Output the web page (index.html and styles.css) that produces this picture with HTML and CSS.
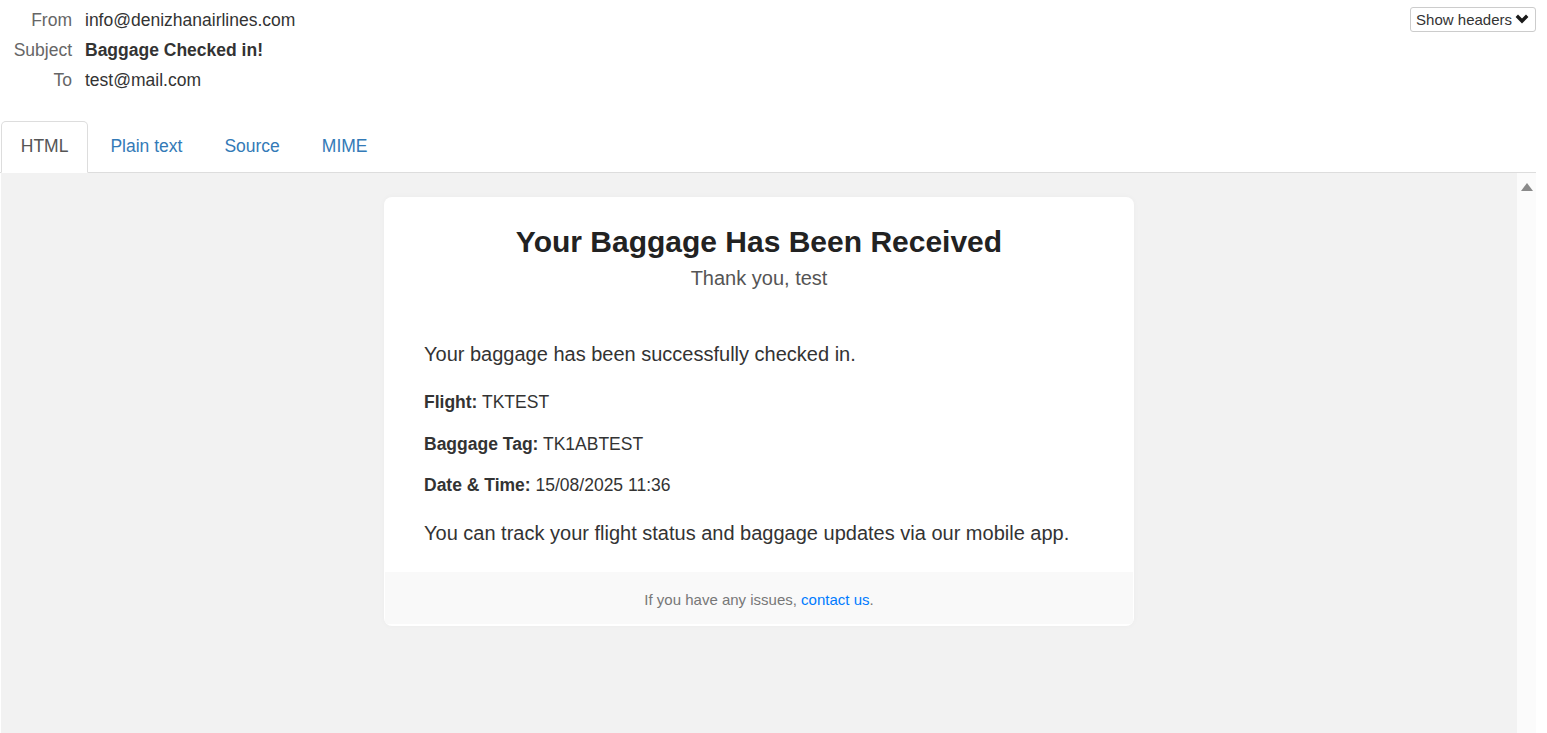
FILE: index.html
```html
<!DOCTYPE html>
<html>
<head>
<meta charset="utf-8">
<link rel="stylesheet" href="styles.css">
</head>
<body>
<div class="page">
  <div class="headers">
    <div class="fields">
      <div class="row"><span class="label">From</span><span class="value">info@denizhanairlines.com</span></div>
      <div class="row"><span class="label">Subject</span><span class="value strong">Baggage Checked in!</span></div>
      <div class="row"><span class="label">To</span><span class="value">test@mail.com</span></div>
    </div>
    <button class="show-btn">Show headers <svg class="chev" width="14" height="10" viewBox="0 0 14 10"><polyline points="1.8,1.8 7,7 12.2,1.8" fill="none" stroke="#1a1a1a" stroke-width="3.4"/></svg></button>
  </div>

  <ul class="tabs">
    <li class="tab active">HTML</li>
    <li class="tab">Plain text</li>
    <li class="tab">Source</li>
    <li class="tab">MIME</li>
  </ul>

  <div class="frame">
    <div class="frame-content">
      <div class="card">
        <div class="card-head">
          <h1 class="title">Your Baggage Has Been Received</h1>
          <p class="subtitle">Thank you, test</p>
        </div>
        <div class="card-body">
          <p class="lead">Your baggage has been successfully checked in.</p>
          <p class="info"><b>Flight:</b> TKTEST</p>
          <p class="info"><b>Baggage Tag:</b> TK1ABTEST</p>
          <p class="info"><b>Date &amp; Time:</b> 15/08/2025 11:36</p>
          <p class="lead last">You can track your flight status and baggage updates via our mobile app.</p>
        </div>
        <div class="card-foot">If you have any issues, <a class="link">contact us</a>.</div>
      </div>
    </div>
    <div class="scrollbar"><span class="arrow-up"></span></div>
  </div>
</div>
</body>
</html>
```

FILE: styles.css
```css
html, body {
  margin: 0;
  padding: 0;
  background: #fff;
}
body {
  font-family: "Liberation Sans", Arial, sans-serif;
  color: #333;
  overflow: hidden;
}
.page {
  width: 1536px;
  height: 733px;
  display: flex;
  flex-direction: column;
}
.headers {
  display: flex;
  justify-content: space-between;
  align-items: flex-start;
  padding-top: 5px;
  height: 121px;
  box-sizing: border-box;
}
.fields {
  display: flex;
  flex-direction: column;
}
.row {
  display: flex;
  font-size: 17.5px;
  line-height: 30px;
  height: 30px;
}
.label {
  width: 72px;
  text-align: right;
  color: #666;
  margin-right: 13px;
}
.value {
  color: #333;
}
.strong {
  font-weight: bold;
}
.show-btn {
  margin-top: 2px;
  height: 25px;
  box-sizing: border-box;
  padding: 0 6px 1px 5px;
  border: 1px solid #ccc;
  border-radius: 3px;
  background: #fff;
  font-family: "Liberation Sans", Arial, sans-serif;
  font-size: 15px;
  color: #333;
  display: flex;
  align-items: center;
  gap: 3px;
}
.chev {
  display: block;
  margin-top: -1px;
}
.tabs {
  list-style: none;
  margin: 0;
  padding: 0 0 0 1px;
  display: flex;
  border-bottom: 1px solid #ddd;
  height: 51px;
}
.tab {
  font-size: 17.5px;
  line-height: 25px;
  padding: 12px 18.75px 12.5px 18.75px;
  margin-right: 2.5px;
  border: 1px solid transparent;
  border-radius: 5px 5px 0 0;
  color: #337ab7;
  height: 51px;
  box-sizing: border-box;
  margin-bottom: -1px;
}
.tab.active {
  color: #555;
  background: #fff;
  border-color: #ddd #ddd transparent #ddd;
  height: 52px;
}
.frame {
  flex: 1;
  display: flex;
  margin-left: 1px;
  min-height: 0;
}
.frame-content {
  flex: 1;
  background: #f2f2f2;
  padding-top: 24px;
  display: flex;
  justify-content: center;
  align-items: flex-start;
}
.scrollbar {
  width: 19px;
  background: #fbfbfb;
  position: relative;
}
.arrow-up {
  position: absolute;
  left: 4px;
  top: 10px;
  width: 0;
  height: 0;
  border-left: 6px solid transparent;
  border-right: 6px solid transparent;
  border-bottom: 8px solid #8a8a8a;
}
.card {
  width: 750px;
  background: #fff;
  border-radius: 8px;
  overflow: hidden;
  box-shadow: 0 0 6px rgba(0, 0, 0, 0.03);
  padding: 0 1px 2px 1px;
  box-sizing: border-box;
}
.card-head {
  padding-top: 25px;
  text-align: center;
}
.title {
  margin: 0;
  font-size: 30px;
  line-height: 40px;
  font-weight: bold;
  color: #222;
}
.subtitle {
  margin: 4px 0 0 0;
  font-size: 20px;
  line-height: 24px;
  color: #555;
}
.card-body {
  padding: 52px 39px 27px 39px;
}
.card-body p {
  margin: 0;
  color: #333;
}
.lead {
  font-size: 20px;
  line-height: 24px;
}
.lead:first-child {
  margin-bottom: 24px !important;
}
.info {
  font-size: 17.5px;
  line-height: 24px;
  margin-bottom: 17.5px !important;
}
.info:nth-child(4) {
  margin-bottom: 24px !important;
}
.card-foot {
  background: #f9f9f9;
  height: 52px;
  line-height: 52px;
  padding-top: 2px;
  box-sizing: border-box;
  text-align: center;
  font-size: 15px;
  color: #777;
}
.link {
  color: #007bff;
  text-decoration: none;
}
```
